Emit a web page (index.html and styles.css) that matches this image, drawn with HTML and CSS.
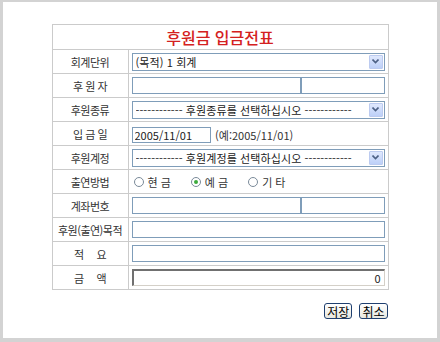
FILE: index.html
```html
<!DOCTYPE html>
<html lang="ko">
<head>
    <meta charset="UTF-8">
    <title>후원금 입금전표</title>
    <link rel="stylesheet" href="styles.css">
</head>
<body>
<div class="frame">
    <table class="slip">
        <tr>
            <th colspan="2" class="title">후원금 입금전표</th>
        </tr>
        <tr>
            <td class="label">회계단위</td>
            <td class="field">
                <div class="combo">
                    <select><option>(목적) 1 회계</option></select>
                    <span class="combo-btn"><svg width="7" height="5" viewBox="0 0 7 5"><path d="M0.5 0.5 L3.5 3.5 L6.5 0.5" fill="none" stroke="#4d6185" stroke-width="1.6"/></svg></span>
                </div>
            </td>
        </tr>
        <tr>
            <td class="label">후 원 자</td>
            <td class="field">
                <div class="pair">
                    <input type="text" class="box wide">
                    <input type="text" class="box narrow">
                </div>
            </td>
        </tr>
        <tr>
            <td class="label">후원종류</td>
            <td class="field">
                <div class="combo">
                    <select><option>------------ 후원종류를 선택하십시오 ------------</option></select>
                    <span class="combo-btn"><svg width="7" height="5" viewBox="0 0 7 5"><path d="M0.5 0.5 L3.5 3.5 L6.5 0.5" fill="none" stroke="#4d6185" stroke-width="1.6"/></svg></span>
                </div>
            </td>
        </tr>
        <tr>
            <td class="label">입 금 일</td>
            <td class="field">
                <input type="text" class="box date" value="2005/11/01">
                <span class="hint">(예:2005/11/01)</span>
            </td>
        </tr>
        <tr>
            <td class="label">후원계정</td>
            <td class="field">
                <div class="combo">
                    <select><option>------------ 후원계정를 선택하십시오 ------------</option></select>
                    <span class="combo-btn"><svg width="7" height="5" viewBox="0 0 7 5"><path d="M0.5 0.5 L3.5 3.5 L6.5 0.5" fill="none" stroke="#4d6185" stroke-width="1.6"/></svg></span>
                </div>
            </td>
        </tr>
        <tr>
            <td class="label">출연방법</td>
            <td class="field">
                <div class="radios">
                    <label><input type="radio" name="method"> 현 금</label>
                    <label><input type="radio" name="method" checked> 예 금</label>
                    <label><input type="radio" name="method"> 기 타</label>
                </div>
            </td>
        </tr>
        <tr>
            <td class="label">계좌번호</td>
            <td class="field">
                <div class="pair">
                    <input type="text" class="box wide">
                    <input type="text" class="box narrow">
                </div>
            </td>
        </tr>
        <tr>
            <td class="label">후원(출연)목적</td>
            <td class="field"><input type="text" class="box full"></td>
        </tr>
        <tr>
            <td class="label">적 &nbsp; &nbsp; 요</td>
            <td class="field"><input type="text" class="box full"></td>
        </tr>
        <tr>
            <td class="label">금 &nbsp; &nbsp; 액</td>
            <td class="field"><input type="text" class="box full amount" value="0"></td>
        </tr>
    </table>
    <div class="actions">
        <button class="btn">저장</button>
        <button class="btn">취소</button>
    </div>
</div>
</body>
</html>
```

FILE: styles.css
```css
/* Reset */
body {
    margin: 0;
    padding: 0;
    font-family: "Noto Sans CJK KR", "Liberation Sans", sans-serif;
    background-color: #fff;
}

.frame {
    width: 440px;
    height: 342px;
    box-sizing: border-box;
    border: 3px solid #d3d3d3;
    border-top-width: 2px;
    border-bottom-width: 4px;
    padding-top: 22px;
}

/* Slip table */
.slip {
    width: 337px;
    margin: 0 auto;
    border-collapse: collapse;
    font-size: 11px;
    letter-spacing: -0.5px;
}

.slip th,
.slip td {
    border: 1px solid #cbcbcb;
    height: 23px;
    padding: 0;
}

.title {
    color: #d42020;
    font-size: 16px;
    font-weight: 500;
    letter-spacing: 0;
    text-align: center;
}

.label {
    width: 75px;
    text-align: center;
    color: #333;
}

.field {
    padding: 0 2px 0 3px !important;
    color: #333;
}

/* Inputs */
.box {
    box-sizing: border-box;
    height: 17px;
    margin: 0;
    padding: 0 2px;
    border: 1px solid #7f9db9;
    font-family: inherit;
    font-size: 11px;
    letter-spacing: 0;
    color: #222;
    vertical-align: middle;
    outline: none;
}

.full {
    display: block;
    width: 253px;
}

.pair {
    display: flex;
    width: 253px;
}

.wide {
    width: 169px;
}

.narrow {
    width: 84px;
}

.date {
    width: 79px;
    height: 16px;
}

.hint {
    margin-left: 2px;
    letter-spacing: 0;
    vertical-align: middle;
}

.amount {
    text-align: right;
    border-top: 2px solid #707070;
    border-left: 2px solid #707070;
    border-right: 1px solid #d4d0c8;
    border-bottom: 1px solid #d4d0c8;
    padding-right: 3px;
}

/* Combo boxes */
.combo {
    display: flex;
    align-items: center;
    width: 253px;
    height: 18px;
    box-sizing: border-box;
    border: 1px solid #7f9db9;
    background-color: #fff;
}

.combo select {
    flex: 1;
    appearance: none;
    -webkit-appearance: none;
    border: none;
    background: transparent;
    margin: 0;
    padding: 0 0 0 3px;
    height: 16px;
    font-family: inherit;
    font-size: 11px;
    letter-spacing: 0.1px;
    color: #222;
    outline: none;
}

.combo-btn {
    display: flex;
    align-items: center;
    justify-content: center;
    width: 14px;
    height: 14px;
    margin-right: 1px;
    box-sizing: border-box;
    border: 1px solid #bccbf0;
    border-radius: 1px;
    background: linear-gradient(#dfe8fd, #bdd0f8);
}

/* Radios */
.radios {
    display: flex;
    align-items: center;
    gap: 20px;
    padding-left: 2px;
}

.radios label {
    display: flex;
    align-items: center;
    gap: 4px;
    font-size: 11px;
    letter-spacing: 0;
}

.radios input {
    appearance: none;
    -webkit-appearance: none;
    width: 10px;
    height: 10px;
    margin: 0;
    border: 1px solid #7a8a99;
    border-radius: 50%;
    background: #fff;
    display: flex;
    align-items: center;
    justify-content: center;
}

.radios input:checked::after {
    content: "";
    width: 4px;
    height: 4px;
    border-radius: 50%;
    background: #3dab3d;
}

/* Buttons */
.actions {
    width: 337px;
    margin: 13px auto 0;
    display: flex;
    justify-content: flex-end;
    gap: 6px;
}

.btn {
    box-sizing: border-box;
    height: 16px;
    padding: 0 2px;
    border: 1px solid #1f3f6f;
    border-radius: 3px;
    background: linear-gradient(#ffffff, #e8e8e0);
    font-family: inherit;
    font-size: 12px;
    line-height: 13px;
    color: #000;
    margin-right: 1px;
}
```
